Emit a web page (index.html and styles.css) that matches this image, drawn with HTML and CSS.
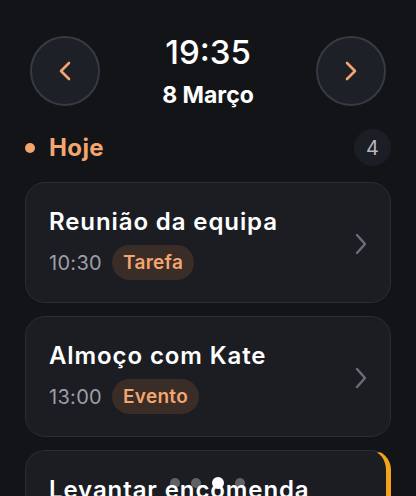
FILE: index.html
```html
<!DOCTYPE html>
<html lang="pt">
<head>
    <meta charset="UTF-8">
    <meta name="viewport" content="width=device-width, initial-scale=1.0">
    <title>Agenda</title>
    <link rel="stylesheet" href="styles.css">
</head>

<body>
    <div class="screen">
        <header class="topbar">
            <button class="nav-btn" aria-label="Dia anterior">
                <svg width="14" height="20" viewBox="0 0 14 20"><path d="M11 2 L3 10 L11 18" /></svg>
            </button>
            <div class="clock">
                <div class="time">19:35</div>
                <div class="date">8 Março</div>
            </div>
            <button class="nav-btn" aria-label="Dia seguinte">
                <svg width="14" height="20" viewBox="0 0 14 20"><path d="M3 2 L11 10 L3 18" /></svg>
            </button>
        </header>

        <section class="day">
            <div class="day-head">
                <span class="dot"></span>
                <h2>Hoje</h2>
                <span class="count">4</span>
            </div>

            <ul class="tasks">
                <li class="task">
                    <div class="task-info">
                        <div class="task-title">Reunião da equipa</div>
                        <div class="task-meta">
                            <span class="task-time">10:30</span>
                            <span class="tag">Tarefa</span>
                        </div>
                    </div>
                    <svg class="chev" width="14" height="22" viewBox="0 0 14 22"><path d="M3 2 L11 11 L3 20" /></svg>
                </li>
                <li class="task">
                    <div class="task-info">
                        <div class="task-title">Almoço com Kate</div>
                        <div class="task-meta">
                            <span class="task-time">13:00</span>
                            <span class="tag">Evento</span>
                        </div>
                    </div>
                    <svg class="chev" width="14" height="22" viewBox="0 0 14 22"><path d="M3 2 L11 11 L3 20" /></svg>
                </li>
                <li class="task urgent">
                    <div class="task-info">
                        <div class="task-title">Levantar encomenda</div>
                        <div class="task-meta">
                            <span class="task-time">17:00</span>
                            <span class="tag">Tarefa</span>
                        </div>
                    </div>
                    <svg class="chev" width="14" height="22" viewBox="0 0 14 22"><path d="M3 2 L11 11 L3 20" /></svg>
                </li>
            </ul>
        </section>

        <div class="pager">
            <span></span>
            <span></span>
            <span class="active"></span>
            <span></span>
        </div>
    </div>
</body>
</html>
```

FILE: styles.css
```css
body {
    margin: 0;
    background: #131418;
    color: #fff;
    font-family: 'Inter', 'Noto Sans', sans-serif;
}

.screen {
    position: relative;
    height: 496px;
    overflow: hidden;
}

.topbar {
    display: flex;
    align-items: center;
    justify-content: space-between;
    padding: 32px 30px 0;
}

.nav-btn {
    width: 70px;
    height: 70px;
    border-radius: 50%;
    background: #1d2027;
    border: 2px solid #363a43;
    display: flex;
    align-items: center;
    justify-content: center;
    padding: 0;
    cursor: pointer;
}

.nav-btn path {
    fill: none;
    stroke: #f3a56f;
    stroke-width: 2.6;
    stroke-linecap: round;
    stroke-linejoin: round;
}

.clock {
    text-align: center;
}

.time {
    font-size: 33px;
    line-height: 40px;
    font-weight: 500;
}

.date {
    margin-top: 9px;
    font-size: 23px;
    line-height: 28px;
    font-weight: 700;
}

.day {
    padding: 0 25px;
}

.day-head {
    display: flex;
    align-items: center;
    margin-top: 20px;
}

.dot {
    width: 10px;
    height: 10px;
    border-radius: 50%;
    background: #f3a56f;
}

.day-head h2 {
    margin: 0 0 0 14px;
    font-size: 24px;
    line-height: 30px;
    font-weight: 700;
    letter-spacing: 0.4px;
    color: #f3a56f;
    flex: 1;
}

.count {
    width: 37px;
    height: 37px;
    border-radius: 50%;
    background: #1b1e25;
    color: #b4b7be;
    font-size: 20px;
    display: flex;
    align-items: center;
    justify-content: center;
}

.tasks {
    list-style: none;
    margin: 16px 0 0;
    padding: 0;
    display: flex;
    flex-direction: column;
    gap: 13px;
}

.task {
    display: flex;
    align-items: center;
    justify-content: space-between;
    background: #1b1d23;
    border: 1px solid #2a2d34;
    border-radius: 20px;
    padding: 24px 22px 22px 23px;
}

.task.urgent {
    border-right: 5px solid #f5a31c;
}

.task-title {
    font-size: 24px;
    line-height: 30px;
    font-weight: 600;
    letter-spacing: 0.9px;
}

.task-meta {
    display: flex;
    align-items: center;
    gap: 10px;
    margin-top: 8px;
}

.task-time {
    font-size: 20px;
    color: #9c9fa6;
    letter-spacing: 0.3px;
}

.tag {
    height: 35px;
    padding: 0 11px;
    border-radius: 18px;
    background: #3a2c27;
    color: #f3a56f;
    font-size: 19px;
    font-weight: 600;
    letter-spacing: 0.3px;
    display: flex;
    align-items: center;
}

.chev path {
    fill: none;
    stroke: #6b6e76;
    stroke-width: 2.4;
    stroke-linecap: round;
    stroke-linejoin: round;
}

.pager {
    position: absolute;
    left: 170px;
    top: 477px;
    display: flex;
    align-items: center;
    gap: 11px;
}

.pager span {
    width: 10px;
    height: 10px;
    border-radius: 50%;
    background: rgba(255, 255, 255, 0.3);
}

.pager span.active {
    width: 12px;
    height: 12px;
    background: #fff;
}
```
